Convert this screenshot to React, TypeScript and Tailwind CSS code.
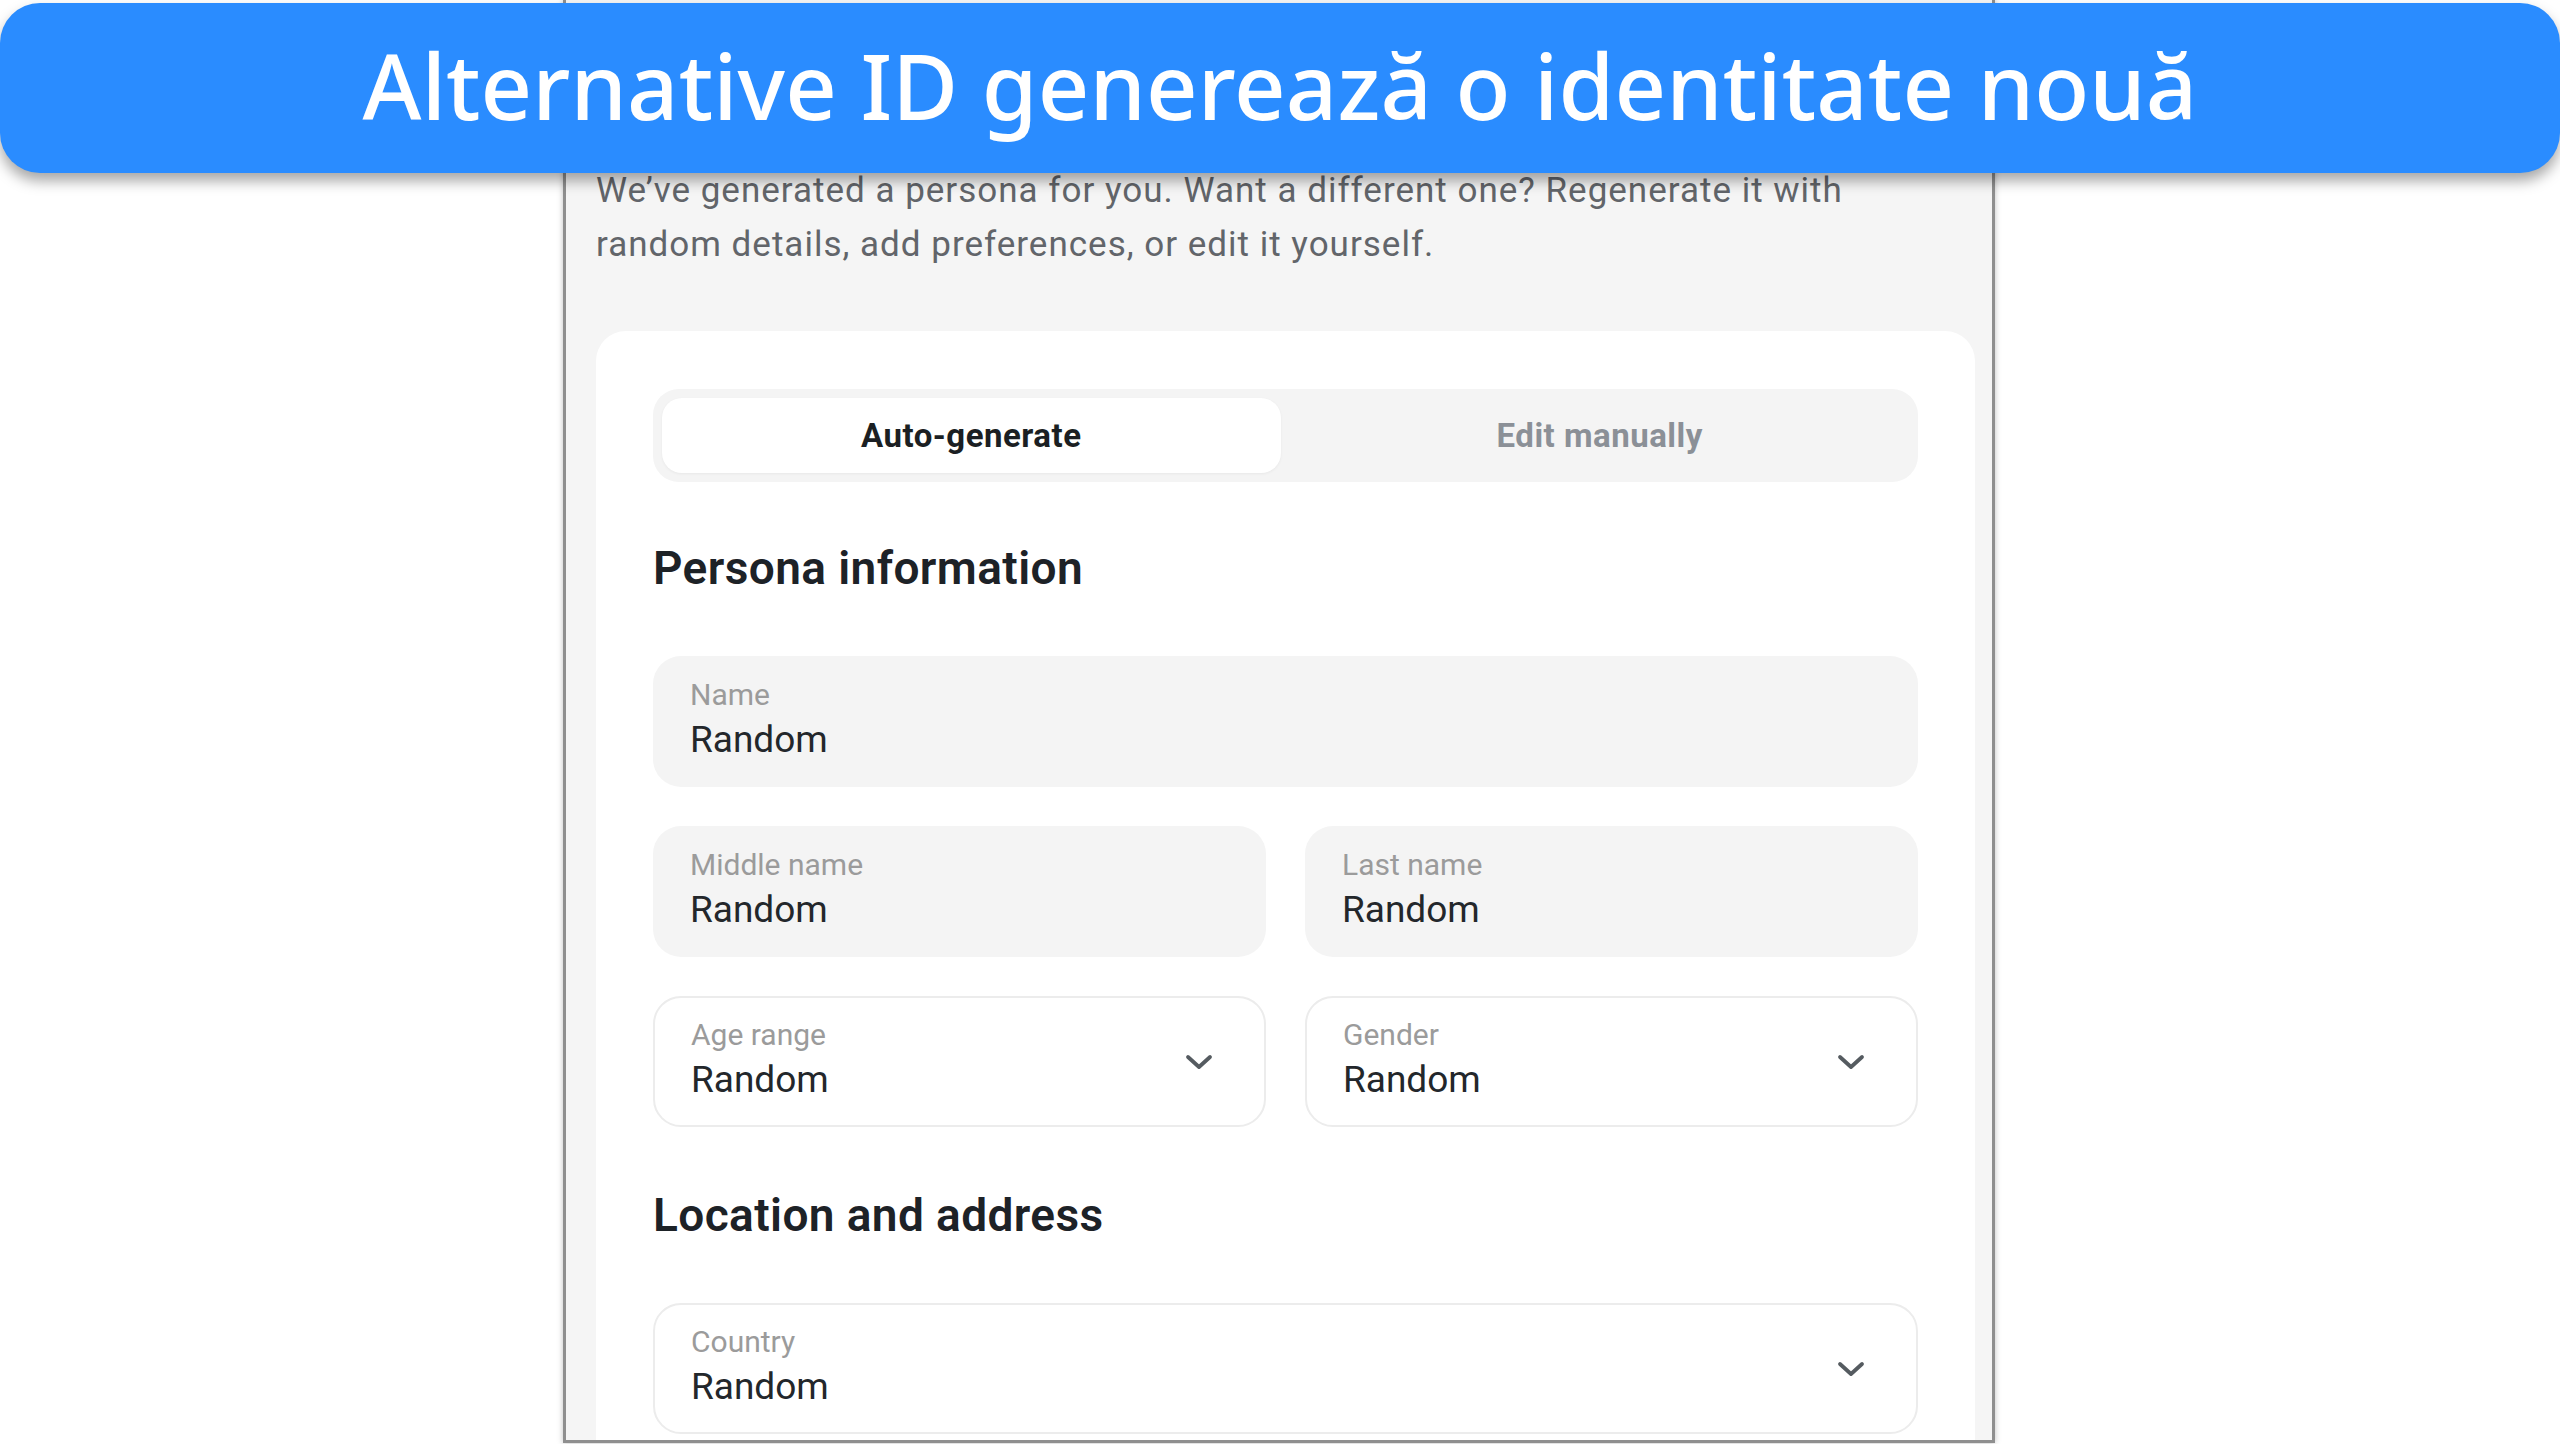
import { ReactNode } from "react";

const ui = { fontFamily: "Roboto, 'Noto Sans', sans-serif" };

function Chevron() {
  return (
    <svg width="30" height="18" viewBox="0 0 30 18" fill="none" className="shrink-0">
      <polyline points="4,4 15,14 26,4" stroke="#555b60" strokeWidth="3.8" strokeLinecap="round" strokeLinejoin="round" />
    </svg>
  );
}

type FieldProps = {
  label: string;
  value: string;
  select?: boolean;
};

function Field({ label, value, select }: FieldProps) {
  return (
    <div
      className={
        select
          ? "flex h-[131px] items-center justify-between rounded-[28px] border-2 border-[#ececec] bg-white pl-[36px] pr-[50px]"
          : "flex h-[131px] items-center rounded-[28px] bg-[#f4f4f4] pl-[37px] pr-[50px]"
      }
    >
      <div className="flex flex-col gap-[6px] pb-[4px]">
        <span className="text-[30px] leading-[34px] text-[#9b9b9b]">{label}</span>
        <span className="text-[37px] leading-[44px] text-[#23272b]">{value}</span>
      </div>
      {select && <Chevron />}
    </div>
  );
}

function Heading({ children }: { children: ReactNode }) {
  return (
    <h2 className="text-[46px] font-semibold leading-[48px] tracking-[0.4px] text-[#1d2227]">
      {children}
    </h2>
  );
}

export default function App() {
  return (
    <div className="relative h-[1444px] w-[2560px] overflow-hidden bg-white" style={ui}>
      {/* caption banner over the screenshot */}
      <div className="absolute left-0 right-0 top-[3px] z-10 flex h-[170px] items-center justify-center rounded-[40px] bg-[#2a8cff] shadow-[0_8px_14px_rgba(0,0,0,0.35)]">
        <h1
          className="pb-[6px] text-[90px] font-medium leading-none tracking-[0.1px] text-white"
          style={{ fontFamily: "'Noto Sans', sans-serif" }}
        >
          Alternative ID generează o identitate nouă
        </h1>
      </div>

      <div className="ml-[563px] flex h-[1443px] w-[1432px] flex-col overflow-hidden border-x-[3px] border-b-[3px] border-[#8f8f8f] bg-[#f5f5f5] pl-[30px] pr-[17px] pt-[164px] shadow-[0_0_6px_rgba(0,0,0,0.25)]">
        <p className="text-[35px] leading-[54px] tracking-[1px] text-[#62656a]">
          We’ve generated a persona for you. Want a different one? Regenerate it with
          <br />
          random details, add preferences, or edit it yourself.
        </p>

        <div className="mt-[59px] flex flex-1 flex-col rounded-t-[30px] bg-white px-[57px] pt-[58px]">
          <div className="grid h-[93px] grid-cols-2 gap-[10px] rounded-[26px] bg-[#f4f4f4] p-[9px]">
            <div className="flex items-center justify-center rounded-[20px] bg-white text-[33px] font-bold tracking-[0.5px] text-[#1b1f23] shadow-[0_1px_3px_rgba(0,0,0,0.05)]">
              Auto-generate
            </div>
            <div className="flex items-center justify-center text-[33px] font-bold tracking-[0.5px] text-[#8b9097]">
              Edit manually
            </div>
          </div>

          <div className="mt-[62px]">
            <Heading>Persona information</Heading>
          </div>

          <div className="mt-[64px] flex flex-col gap-[39px]">
            <Field label="Name" value="Random" />
            <div className="grid grid-cols-2 gap-[39px]">
              <Field label="Middle name" value="Random" />
              <Field label="Last name" value="Random" />
            </div>
            <div className="grid grid-cols-2 gap-[39px]">
              <Field label="Age range" value="Random" select />
              <Field label="Gender" value="Random" select />
            </div>
          </div>

          <div className="mt-[64px]">
            <Heading>Location and address</Heading>
          </div>

          <div className="mt-[64px]">
            <Field label="Country" value="Random" select />
          </div>
        </div>
      </div>
    </div>
  );
}
